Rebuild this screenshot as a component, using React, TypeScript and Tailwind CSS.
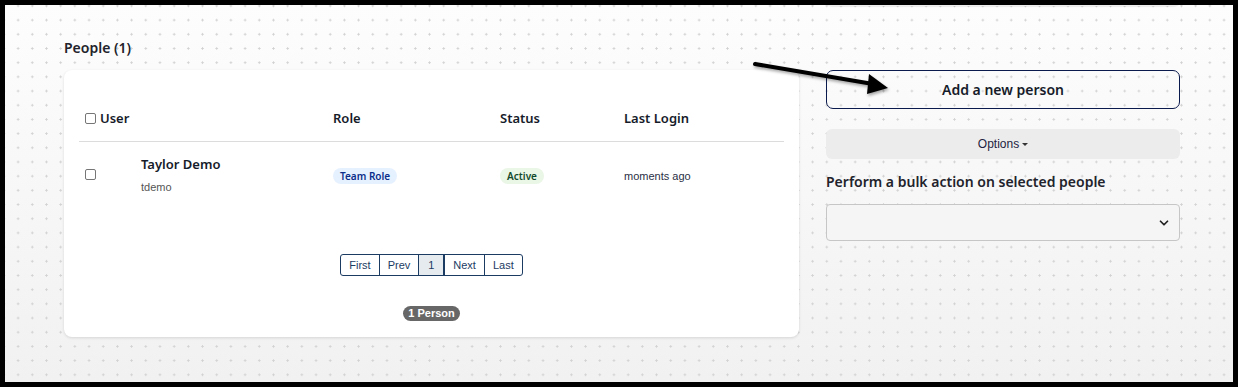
import { ChevronDown } from 'lucide-react';

const heading = "font-['Noto_Sans',sans-serif]";
const plain = "font-['Liberation_Sans',Arial,sans-serif]";

function Checkbox() {
  return <span className="inline-block w-[11px] h-[11px] rounded-[2px] border border-[#767676] bg-white" />;
}

function Pagination() {
  const pages = ['First', 'Prev', '1', 'Next', 'Last'];
  return (
    <div className={`flex border border-[#1c3b63] rounded-[3px] overflow-hidden ${plain} text-[11px] text-[#1c3b63]`}>
      {pages.map((p, i) => (
        <span
          key={p}
          className={`h-[20px] flex items-center justify-center ${i > 0 ? 'border-l border-[#1c3b63]' : ''} ${p === '1' ? 'w-[26px] bg-[#e6ebf0] border-r border-r-[#1c3b63]' : 'px-[8px]'}`}
        >
          {p}
        </span>
      ))}
    </div>
  );
}

function PeopleCard() {
  return (
    <div className="bg-white rounded-lg shadow-[0_1px_3px_rgba(0,0,0,0.12)] px-[15px] pt-[37px] pb-[16px]">
      {/* header */}
      <div className={`grid grid-cols-[248px_167px_124px_1fr] items-start pt-[3px] h-[35px] border-b border-[#dcdcdc] ${heading} text-[13px] leading-[16px] font-semibold text-[#161b2a]`}>
        <div className="flex items-center gap-[4px] pl-[6px]">
          <Checkbox />
          <span>User</span>
        </div>
        <div className="pl-[6px]">Role</div>
        <div className="pl-[6px]">Status</div>
        <div className="pl-[6px]">Last Login</div>
      </div>

      {/* row */}
      <div className="grid grid-cols-[248px_167px_124px_1fr] items-start h-[67px]">
        <div className="flex items-start pl-[6px]">
          <span className="mt-[27px] flex"><Checkbox /></span>
          <div className="ml-[45px] mt-[13px] flex flex-col gap-[7px]">
            <span className={`${heading} text-[13px] font-semibold text-[#161b2a] leading-[18px]`}>Taylor Demo</span>
            <span className={`${plain} text-[11px] text-[#555] leading-[14px]`}>tdemo</span>
          </div>
        </div>
        <div className="flex pl-[6px] pt-[26px]">
          <span className={`${heading} rounded-full bg-[#e6f1ff] text-[#0b2e8a] text-[10px] font-semibold px-[7px] leading-[16px]`}>Team Role</span>
        </div>
        <div className="flex pl-[6px] pt-[26px]">
          <span className={`${heading} rounded-full bg-[#eaf6e6] text-[#124a2b] text-[10px] font-semibold px-[7px] leading-[16px]`}>Active</span>
        </div>
        <div className={`pl-[6px] pt-[27px] ${plain} text-[11px] leading-[14px] text-[#2a2f45]`}>moments ago</div>
      </div>

      <div className="flex justify-center mt-[45px]">
        <Pagination />
      </div>

      <div className="flex justify-center mt-[30px]">
        <span className={`${plain} rounded-full bg-[#676767] text-white text-[11px] font-bold px-[5px] leading-[15px]`}>1 Person</span>
      </div>
    </div>
  );
}

function Arrow() {
  return (
    <svg className="absolute left-[742px] top-[50px] pointer-events-none" width="150" height="45" viewBox="0 0 150 45">
      <defs>
        <filter id="sh" x="-20%" y="-50%" width="140%" height="200%">
          <feDropShadow dx="1" dy="2" stdDeviation="1.5" floodColor="#000" floodOpacity="0.35" />
        </filter>
      </defs>
      <g filter="url(#sh)">
        <line x1="8" y1="9" x2="126" y2="29" stroke="#000" strokeWidth="4" strokeLinecap="round" />
        <polygon points="141,33 122,19 120,39" fill="#000" />
      </g>
    </svg>
  );
}

export default function App() {
  return (
    <div className="w-[1238px] h-[387px] bg-black p-[5px]">
      <div className="relative w-full h-full bg-[linear-gradient(#fdfdfd,#f1f1f1)] overflow-hidden">
        <div className="absolute inset-0 bg-[radial-gradient(circle,#d2d2d2_0.9px,transparent_1.3px)] bg-[size:14.2px_14.2px] bg-[position:6px_8px]" />

        <div className="relative flex gap-[27px] pl-[59px]">
          {/* left column */}
          <div className="w-[735px] flex flex-col">
            <h2 className={`${heading} text-[14px] font-semibold text-[#22232b] mt-[33px] mb-[12px] leading-[20px]`}>People (1)</h2>
            <PeopleCard />
          </div>

          {/* right column */}
          <div className="w-[354px] flex flex-col">
            <div className="h-[6px] -mt-[5px] bg-[#ededed] rounded-b-md shadow-[0_1px_1px_rgba(0,0,0,0.08)]" />
            <button className={`mt-[64px] h-[39px] rounded-[7px] border border-[#0b1a4d] ${heading} text-[14px] font-semibold text-[#161b2a]`}>
              Add a new person
            </button>
            <button className={`mt-[20px] h-[30px] rounded-[6px] bg-[#ececec] ${plain} text-[12px] text-[#1e2340] flex items-center justify-center gap-[3px]`}>
              Options
              <span className="inline-block w-0 h-0 border-l-[3px] border-r-[3px] border-t-[3px] border-l-transparent border-r-transparent border-t-[#333]" />
            </button>
            <div className={`mt-[13px] ${heading} text-[14px] font-semibold text-[#22232b] leading-[20px]`}>
              Perform a bulk action on selected people
            </div>
            <div className="mt-[12px] h-[37px] rounded-[4px] border border-[#c6c6c6] bg-[#f5f5f5] flex items-center justify-end pr-[8px]">
              <ChevronDown size={14} strokeWidth={3} className="text-[#222]" />
            </div>
          </div>
        </div>

        <Arrow />
      </div>
    </div>
  );
}
